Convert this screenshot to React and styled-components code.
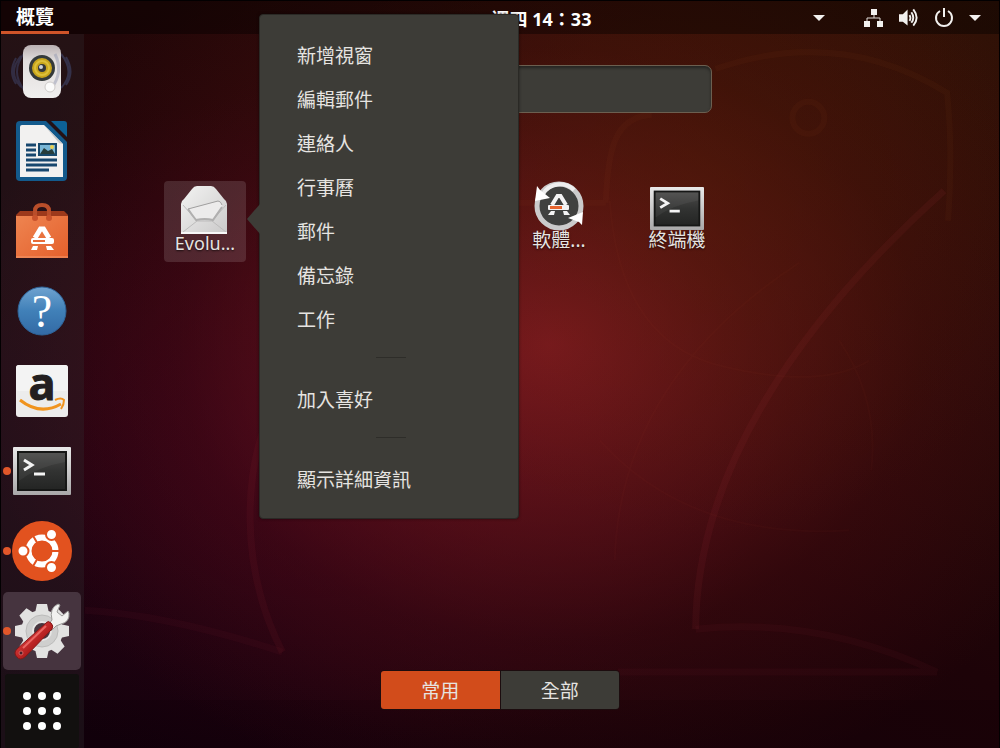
import React from "react";
import styled, { createGlobalStyle, css } from "styled-components";

const GlobalStyle = createGlobalStyle`
  *, *::before, *::after { box-sizing: border-box; }
  body {
    margin: 0;
    background: #000;
    color: #e6e4e1;
    font-family: "Noto Sans", "Noto Sans CJK TC", sans-serif;
    font-size: 19px;
  }
  button, input { font: inherit; color: inherit; }
  button { padding: 0; border: 0; background: none; cursor: pointer; }
  ul { margin: 0; padding: 0; list-style: none; }
`;

const Desktop = styled.div`
  position: relative;
  display: grid;
  grid-template-rows: auto 1fr;
  min-height: 100vh;
  border: 1px solid #020001;
  border-bottom: 0;
  background:
    radial-gradient(ellipse 38% 48% at 70% 24%, rgba(84, 34, 0, 0.34) 0%, rgba(70, 30, 0, 0) 100%),
    radial-gradient(ellipse 58% 62% at 55% 46%, rgba(132, 27, 34, 0.9) 0%, rgba(120, 25, 28, 0.62) 30%, rgba(104, 19, 22, 0.27) 64%, rgba(90, 12, 16, 0) 100%),
    radial-gradient(ellipse 46% 46% at 32% 58%, rgba(76, 0, 42, 0.48) 0%, rgba(60, 0, 34, 0) 100%),
    linear-gradient(30deg, #13010d 0%, #1d0308 48%, #301106 100%);
`;

const Wallpaper = styled.svg`
  position: absolute;
  inset: 0;
  width: 100%;
  height: 100%;
  pointer-events: none;
`;

const TopBar = styled.header`
  position: relative;
  display: grid;
  grid-template-columns: 83px 1fr auto 1fr;
  align-items: stretch;
  height: 33px;
  background: rgba(0, 0, 0, 0.38);
  color: #fff;
  font-weight: 700;
  line-height: 32px;
`;

const Activities = styled.button`
  width: 68px;
  height: 33px;
  border-bottom: 3px solid #cf5429;
  font-weight: 700;
  line-height: 32px;
`;

const Clock = styled.time`
  grid-column: 3;
  font-size: 18px;
  line-height: 36px;
`;

const Status = styled.div`
  display: flex;
  justify-content: flex-end;
  align-items: center;
  padding: 0 18px 2px 0;

  svg { display: block; }
`;

const StatusButton = styled.button`
  display: flex;
  align-items: center;
  gap: 15px;
  margin-left: ${(p) => (p.$spaced ? "39px" : "0")};
`;

const Body = styled.div`
  position: relative;
  display: flex;
`;

const Dock = styled.ul`
  display: flex;
  flex-direction: column;
  align-items: center;
  gap: 6px;
  width: 83px;
  padding-right: 2px;
  flex: none;
  background: rgba(46, 44, 48, 0.34);
`;

const DockItem = styled.li`
  position: relative;
  width: 74px;
  height: 74px;
  border-radius: 3px;
  ${(p) => p.$active && css`
    background: #46343f;
    box-shadow: 0 0 0 2px #46343f;
  `}
  ${(p) => p.$dark && css`
    background: #12100f;
  `}
  ${(p) => p.$running && css`
    &::before {
      content: "";
      position: absolute;
      left: -2px;
      top: 33px;
      width: 8px;
      height: 8px;
      border-radius: 50%;
      background: #e2572a;
    }
  `}
`;

const DockButton = styled.button`
  display: flex;
  align-items: center;
  justify-content: center;
  width: 100%;
  height: 100%;

  svg { display: block; overflow: visible; }
`;

const Overview = styled.main`
  flex: 1;
  display: flex;
  flex-direction: column;
  align-items: center;
  padding: 31px 83px 38px 0;
`;

const Search = styled.input`
  width: 424px;
  max-width: 100%;
  height: 48px;
  padding: 0 16px;
  border: 1px solid #6c5f50;
  border-radius: 7px;
  background: #3d3c37;
  box-shadow: inset 0 2px 3px rgba(0, 0, 0, 0.4);
  outline: none;
`;

const AppGrid = styled.ul`
  display: grid;
  grid-template-columns: repeat(6, 82px);
  column-gap: 36px;
  margin-top: 68px;
`;

const AppCell = styled.li`
  position: relative;
  grid-column: ${(p) => p.$column};
`;

const AppTile = styled.button`
  display: flex;
  flex-direction: column;
  align-items: center;
  width: 100%;
  height: 81px;
  border-radius: 4px;
  padding-top: ${(p) => (p.$selected ? "3px" : "0")};
  background: ${(p) => (p.$selected ? "rgba(255, 255, 255, 0.13)" : "none")};

  svg { display: block; }
`;

const AppName = styled.span`
  font-size: ${(p) => (p.$latin ? "18px" : "19px")};
  line-height: 18px;
  white-space: nowrap;
  text-shadow: 0 1px 2px rgba(0, 0, 0, 0.7);
`;

const Menu = styled.ul`
  position: absolute;
  z-index: 2;
  top: -167px;
  left: 95px;
  width: 260px;
  padding: 19px 34px 16px 37px;
  border: 1px solid #2a2925;
  border-radius: 4px;
  background: #3d3c37;
  box-shadow: 0 0 3px rgba(0, 0, 0, 0.5);

  &::before {
    content: "";
    position: absolute;
    left: -13px;
    top: 189px;
    width: 13px;
    height: 30px;
    background: #3d3c37;
    clip-path: polygon(100% 0, 0 50%, 100% 100%);
  }
`;

const MenuItem = styled.button`
  display: block;
  width: 100%;
  height: 44px;
  line-height: 44px;
  text-align: left;
`;

const Divider = styled.li`
  width: 30px;
  height: 1px;
  margin: 15px auto 20px;
  background: #2e2d29;
`;

const ViewSwitch = styled.div`
  display: flex;
  width: 240px;
  margin-top: auto;
  border: 1px solid #1c0c0e;
  border-radius: 4px;
  overflow: hidden;
`;

const ViewButton = styled.button`
  flex: 1;
  height: 38px;
  line-height: 40px;
  background: ${(p) => (p.$current ? "#d24c1b" : "#3d3c37")};

  & + & { border-left: 1px solid #1c0c0e; }
`;

const Backdrop = () => (
  <Wallpaper viewBox="0 0 1000 748" preserveAspectRatio="none" fill="none" aria-hidden="true">
    <path d="M0 700H1000V748H0Z" fill="#000" opacity=".1" />
    <g stroke="#a8303c" strokeOpacity=".1" strokeWidth="7">
      <path d="M945 190C800 320 697 470 696 629" />
      <path d="M696 629Q820 616 938 672M618 672H938" strokeOpacity=".06" />
      <path d="M275 400C240 470 240 570 282 652" strokeOpacity=".09" />
      <path d="M282 652Q170 615 84 610" strokeOpacity=".06" />
    </g>
    <g stroke="#a85a28" strokeOpacity=".06" strokeWidth="6">
      <path d="M716 68Q840 25 948 92Q954 150 949 220" />
      <circle cx="809" cy="117" r="16" />
      <path d="M606 202C608 150 614 116 652 114M518 202H606" />
    </g>
    <g stroke="#d05040" strokeOpacity=".035" strokeWidth="2">
      <path d="M610 200Q620 340 720 365T870 360M800 262Q620 380 615 560M840 340Q880 400 872 470M600 440Q690 540 850 530" />
    </g>
  </Wallpaper>
);

const SpeakerIcon = () => (
  <svg width="62" height="62" viewBox="0 0 62 62" fill="none" aria-hidden="true">
    <defs>
      <linearGradient id="spk" x1="0" y1="0" x2="0" y2="1">
        <stop stopColor="#b9b0b2" /><stop offset=".3" stopColor="#e2dedd" /><stop offset="1" stopColor="#f0efee" />
      </linearGradient>
    </defs>
    <g stroke="#3c3f60" strokeWidth="2">
      <path d="M10 16Q-4 32 10 47M5 18Q-3 32 5 44M14 12Q-2 32 14 51" opacity=".6" />
      <path d="M50 14Q65 32 50 48M55 17Q64 32 55 45" opacity=".7" />
    </g>
    <rect x="12" y="5" width="38" height="53" rx="8" fill="url(#spk)" />
    <path d="M44 14Q53 32 40 49" stroke="#8b93ad" strokeWidth="3" opacity=".45" />
    <circle cx="31" cy="28" r="13" fill="#343a3b" />
    <circle cx="31" cy="28" r="10" fill="#c8a51c" />
    <circle cx="31" cy="28" r="7" stroke="#dcc03a" strokeWidth="2" />
    <circle cx="31" cy="28" r="4" fill="#33373b" />
    <circle cx="30" cy="27" r="2" fill="#cfd5da" />
    <circle cx="39" cy="47" r="5" fill="#fbfbfa" stroke="#cfccca" />
  </svg>
);

const WriterIcon = () => (
  <svg width="54" height="62" viewBox="0 0 54 62" aria-hidden="true">
    <path d="M5 1H31L52 22V57Q52 61 48 61H5Q1 61 1 57V5Q1 1 5 1Z" fill="#135a8c" />
    <path d="M36 1H49Q52 1 52 4V17Z" fill="#0d6196" />
    <path d="M7 5H29L48 24V57H5V7Q5 5 7 5Z" fill="#f2f1f0" />
    <path d="M29 5L48 24L44 23Z" fill="#c9c9ca" />
    <path d="M11 25H21M11 30H21M11 35H21M11 40H42M11 45H42M11 50H34" stroke="#17476e" strokeWidth="3" />
    <rect x="23" y="23" width="19" height="13" fill="#18496c" />
    <rect x="25" y="25" width="15" height="9" fill="#78b6d6" />
    <path d="M25 34L29 28L33 31L37 29L40 34Z" fill="#263d3c" />
    <circle cx="37" cy="27" r="2" fill="#e8cf50" />
  </svg>
);

const SoftwareIcon = () => (
  <svg width="54" height="56" viewBox="0 0 54 56" fill="none" aria-hidden="true">
    <defs>
      <linearGradient id="bag" x1="0" y1="0" x2="1" y2="1">
        <stop stopColor="#ee8450" /><stop offset="1" stopColor="#e4602c" />
      </linearGradient>
    </defs>
    <path d="M1 12L5 8H49L53 12V16H1Z" fill="#9d391b" />
    <path d="M1 13H53V55H1Z" fill="url(#bag)" />
    <path d="M1 54H53" stroke="#f49b6e" strokeWidth="1" />
    <path d="M20 16V8Q20 2 27 2T34 8V16" stroke="#b94e2a" strokeWidth="4" />
    <circle cx="20" cy="15" r="3" fill="#c9532c" /><circle cx="34" cy="15" r="3" fill="#c9532c" />
    <path d="M20 35L25.500 26H28.500L34 35" stroke="#fff" strokeWidth="5" />
    <rect x="16" y="35" width="23" height="6" rx="2" fill="#fff" />
    <rect x="18" y="37" width="12" height="2" fill="#e86c38" />
    <path d="M18 43H23L22 47H16ZM31 43H36L39 47H32Z" fill="#fff" />
  </svg>
);

const HelpIcon = () => (
  <svg width="50" height="52" viewBox="0 0 50 52" aria-hidden="true">
    <defs>
      <linearGradient id="hlp" x1="0" y1="0" x2="0" y2="1">
        <stop stopColor="#6fa3d0" /><stop offset=".5" stopColor="#4080b8" /><stop offset="1" stopColor="#336aa5" />
      </linearGradient>
    </defs>
    <circle cx="25" cy="26" r="24" fill="url(#hlp)" stroke="#2e6398" />
    <text x="25" y="42" textAnchor="middle" fill="#fff" fontFamily="Liberation Serif, serif" fontSize="46">?</text>
  </svg>
);

const AmazonIcon = () => (
  <svg width="54" height="54" viewBox="0 0 54 54" fill="none" aria-hidden="true">
    <rect x="1" y="1" width="52" height="52" rx="3" fill="#ececec" />
    <rect x="1" y="1" width="52" height="26" rx="3" fill="#f3f3f3" />
    <text x="27" y="36" textAnchor="middle" fill="#231f20" stroke="#231f20" fontFamily="Open Sans, sans-serif" fontWeight="700" fontSize="45">a</text>
    <path d="M5 36Q25 52 46 40" stroke="#f0941f" strokeWidth="3" />
    <path d="M40 36Q46 33 49 36Q49 41 46 45" stroke="#f0941f" strokeWidth="2" />
  </svg>
);

const TerminalIcon = ({ width, height, id }) => (
  <svg width={width} height={height} viewBox="0 0 58 48" preserveAspectRatio="none" fill="none" aria-hidden="true">
    <defs>
      <linearGradient id={id} x1="0" y1="0" x2="0" y2="1">
        <stop stopColor="#4b4b4a" /><stop offset=".5" stopColor="#323332" /><stop offset="1" stopColor="#242524" />
      </linearGradient>
      <linearGradient id={id + "f"} x1="0" y1="0" x2="0" y2="1">
        <stop stopColor="#e9e9e9" /><stop offset="1" stopColor="#a9a8a9" />
      </linearGradient>
    </defs>
    <rect width="58" height="48" rx="1" fill={"url(#" + id + "f)"} />
    <rect x="4" y="4" width="50" height="40" fill="#161716" />
    <rect x="6" y="6" width="46" height="36" fill={"url(#" + id + ")"} />
    <path d="M6 6H52V15Q24 20 6 34Z" fill="#fff" opacity=".05" />
    <path d="M11 13L19 18L11 23M21 27H32" stroke="#f4f4f4" strokeWidth="3" />
  </svg>
);

const UbuntuIcon = () => (
  <svg width="60" height="60" viewBox="0 0 60 60" fill="none" aria-hidden="true">
    <circle cx="30" cy="30" r="30" fill="#e2521f" />
    <circle cx="30" cy="30" r="13.500" stroke="#fff" strokeWidth="6" />
    <g stroke="#e2521f" strokeWidth="2">
      <path d="M30 30H50M30 30L20 13M30 30L20 47" />
    </g>
    <circle cx="30" cy="30" r="10" fill="#e2521f" />
    <g fill="#fff" stroke="#e2521f" strokeWidth="2">
      <circle cx="11" cy="30" r="5.500" /><circle cx="39.500" cy="13.500" r="5.500" /><circle cx="39.500" cy="46.500" r="5.500" />
    </g>
  </svg>
);

const SettingsIcon = () => (
  <svg width="56" height="56" viewBox="0 0 56 56" fill="none" aria-hidden="true">
    <defs>
      <linearGradient id="red" x1="0" y1="0" x2="1" y2="1">
        <stop offset=".3" stopColor="#d93a3a" /><stop offset=".7" stopColor="#a31414" />
      </linearGradient>
    </defs>
    <g fill="#e2e2e1">
      <circle cx="28" cy="28" r="21" />
      {[0, 45, 90, 135].map((a) => (
        <path key={a} d="M23 1H33L35 10V46L33 55H23L21 46V10Z" transform={"rotate(" + a + " 28 28)"} />
      ))}
    </g>
    <circle cx="28" cy="28" r="16" fill="#cfcfce" stroke="#bcbcbb" />
    <circle cx="28" cy="28" r="9" fill="#47363f" stroke="#e6e6e5" strokeWidth="2" />
    <path d="M34 22L38 17Q35 5 44 1L46 2L43 9L48 13L54 8L55 10Q56 19 47 21L42 23L37 28Z" fill="#f1f1ef" stroke="#9a9a98" />
    <path d="M32 20Q34 17 37 20T38 26L11 54Q6 58 3 54Q-1 50 3 46Z" fill="url(#red)" stroke="#841717" />
    <path d="M32 23L9 45" stroke="#ea6561" strokeWidth="2" />
    <circle cx="7" cy="50" r="2" fill="#47202a" stroke="#d9625e" />
  </svg>
);

const AppsGridIcon = () => (
  <svg width="40" height="40" viewBox="0 0 40 40" fill="#fff" aria-hidden="true">
    {[5, 20, 35].map((y) => [5, 20, 35].map((x) => <circle key={x + "-" + y} cx={x} cy={y} r="4" />))}
  </svg>
);

const MailIcon = () => (
  <svg width="50" height="50" viewBox="0 0 50 50" fill="none" aria-hidden="true">
    <defs>
      <linearGradient id="env" x1="0" y1="0" x2="1" y2="1">
        <stop stopColor="#f3f3f2" /><stop offset="1" stopColor="#cbcaca" />
      </linearGradient>
    </defs>
    <path d="M17 2H31Q34 2 36 5L44 15Q47 17 47 20V49H1V20Q1 17 4 15L12 5Q14 2 17 2Z" fill="url(#env)" />
    <path d="M3 21L17 37L3 48M46 21L32 37L46 48M16 37H33" stroke="#bdbcbc" />
    <path d="M8 25L39 17Q43 17 42 23L32 36H17Q12 31 8 25Z" fill="#ecebeb" />
    <path d="M42 23L33 36Q25 34 16 36Q12 31 8 25" stroke="#b0afaf" strokeWidth="2" />
    <path d="M8 25L38 17Q41 17 42 21" stroke="#a09f9f" />
    <path d="M1 49H47" stroke="#f8f8f8" strokeWidth="2" />
  </svg>
);

const UpdaterIcon = () => (
  <svg width="50" height="50" viewBox="0 0 50 50" fill="none" aria-hidden="true">
    <circle cx="25" cy="25" r="22" fill="#40413f" stroke="#cbcbcb" strokeWidth="5" />
    <path d="M9 13A20 20 0 0 1 40 9" stroke="#eee" strokeWidth="4" />
    <path d="M3 5L6 9L16 17L1 20ZM48 44L45 41L34 37L49 31Z" fill="#fff" />
    <path d="M18 24L23.500 15H26.500L32 24" stroke="#f4f4f4" strokeWidth="4" />
    <rect x="14" y="24" width="21" height="5" rx="1" fill="#f4f4f4" />
    <rect x="16" y="25" width="12" height="3" fill="#e9662f" />
    <path d="M17 30H21L20 34H14ZM29 30H33L36 34H30Z" fill="#f4f4f4" />
  </svg>
);

const TerminalAppIcon = () => (
  <svg width="54" height="50" viewBox="0 0 54 50" aria-hidden="true">
    <g transform="translate(0 6)"><TerminalIcon width={54} height={43} id="ta" /></g>
  </svg>
);

const Caret = () => (
  <svg width="12" height="8" viewBox="0 0 12 8" fill="#f2f0ee" aria-hidden="true"><path d="M0 1H12L6 7Z" /></svg>
);

const NetworkIcon = () => (
  <svg width="20" height="20" viewBox="0 0 20 20" fill="#f2f0ee" aria-hidden="true">
    <path d="M7 1H13V7H7ZM0 13H6V19H0ZM13 13H19V19H13Z" />
    <path d="M10 7V10M3 13V10H16V13" fill="none" stroke="#e0dbd8" strokeWidth="1" />
  </svg>
);

const VolumeIcon = () => (
  <svg width="20" height="20" viewBox="0 0 21 20" fill="none" stroke="#f2f0ee" strokeWidth="2" aria-hidden="true">
    <path d="M0 6H4L9 1V18L4 14H0Z" fill="#f2f0ee" stroke="none" />
    <path d="M11 7Q13 10 11 13M13 4Q17 10 13 15M15 1Q22 10 15 18" />
  </svg>
);

const PowerIcon = () => (
  <svg width="20" height="20" viewBox="0 0 20 20" fill="none" stroke="#f2f0ee" strokeWidth="2" aria-hidden="true">
    <path d="M6 3A8 8 0 1 0 14 3M10 0V9" />
  </svg>
);

const dockItems = [
  { name: "音樂播放器", icon: <SpeakerIcon /> },
  { name: "LibreOffice Writer", icon: <WriterIcon /> },
  { name: "Ubuntu 軟體", icon: <SoftwareIcon /> },
  { name: "說明", icon: <HelpIcon /> },
  { name: "Amazon", icon: <AmazonIcon /> },
  { name: "終端機", icon: <TerminalIcon width={58} height={48} id="td" />, running: true },
  { name: "Ubuntu", icon: <UbuntuIcon />, running: true },
  { name: "設定", icon: <SettingsIcon />, running: true, active: true },
  { name: "顯示應用程式", icon: <AppsGridIcon />, dark: true },
];

const menuGroups = [
  ["新增視窗", "編輯郵件", "連絡人", "行事曆", "郵件", "備忘錄", "工作"],
  ["加入喜好"],
  ["顯示詳細資訊"],
];

const ContextMenu = () => (
  <Menu>
    {menuGroups.map((group, i) => (
      <React.Fragment key={group[0]}>
        {i > 0 && <Divider role="separator" />}
        {group.map((label) => (
          <li key={label}><MenuItem type="button">{label}</MenuItem></li>
        ))}
      </React.Fragment>
    ))}
  </Menu>
);

export default function App() {
  return (
    <>
      <GlobalStyle />
      <Desktop>
        <Backdrop />
        <TopBar>
          <Activities type="button">概覽</Activities>
          <Clock dateTime="14:33">週四 14：33</Clock>
          <Status>
            <StatusButton type="button" aria-label="輸入法"><Caret /></StatusButton>
            <StatusButton type="button" aria-label="系統選單" $spaced>
              <NetworkIcon /><VolumeIcon /><PowerIcon /><Caret />
            </StatusButton>
          </Status>
        </TopBar>
        <Body>
          <Dock>
            {dockItems.map((d) => (
              <DockItem key={d.name} $running={d.running} $active={d.active} $dark={d.dark}>
                <DockButton type="button" aria-label={d.name}>{d.icon}</DockButton>
              </DockItem>
            ))}
          </Dock>
          <Overview>
            <Search type="search" aria-label="搜尋" />
            <AppGrid>
              <AppCell $column={1}>
                <AppTile type="button" $selected><MailIcon /><AppName $latin>Evolu...</AppName></AppTile>
                <ContextMenu />
              </AppCell>
              <AppCell $column={4}>
                <AppTile type="button"><UpdaterIcon /><AppName>軟體...</AppName></AppTile>
              </AppCell>
              <AppCell $column={5}>
                <AppTile type="button"><TerminalAppIcon /><AppName>終端機</AppName></AppTile>
              </AppCell>
            </AppGrid>
            <ViewSwitch>
              <ViewButton type="button" aria-pressed="true" $current>常用</ViewButton>
              <ViewButton type="button" aria-pressed="false">全部</ViewButton>
            </ViewSwitch>
          </Overview>
        </Body>
      </Desktop>
    </>
  );
}
